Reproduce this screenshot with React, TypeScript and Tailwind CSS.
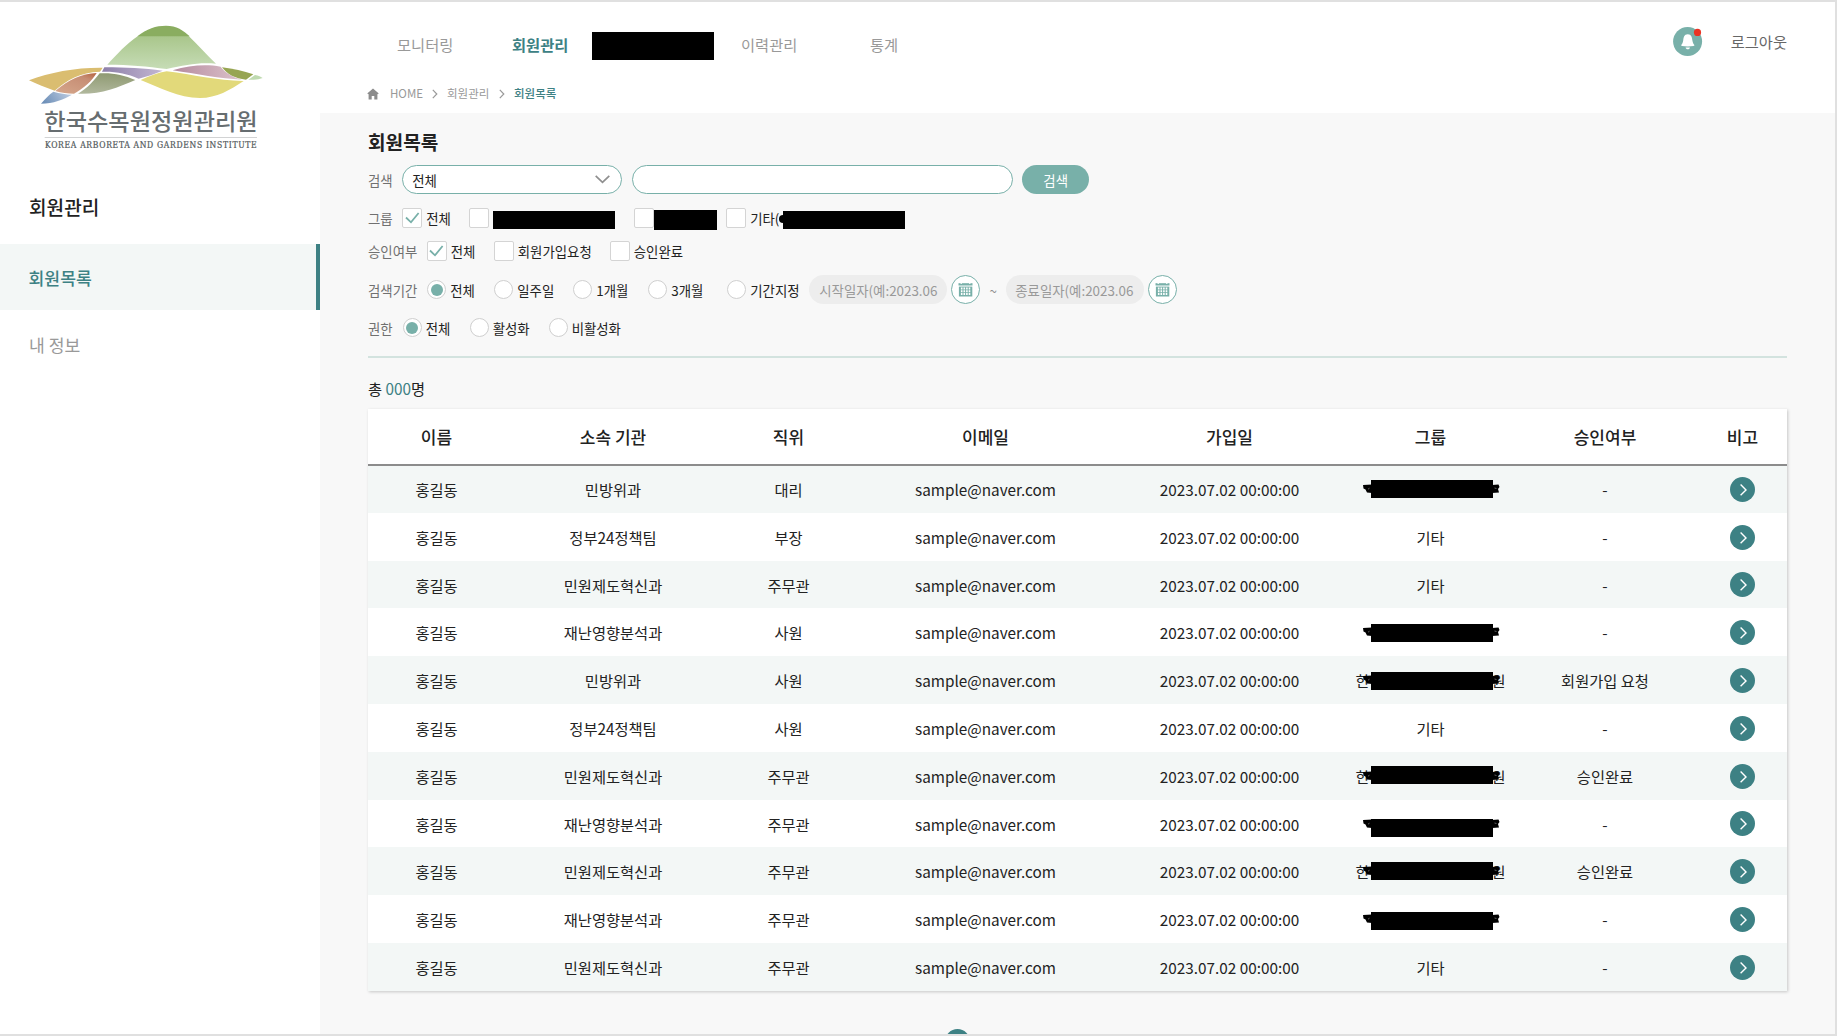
import React from "react";

type Mark = "scribble" | "named" | null;

interface Member {
  org: string;
  position: string;
  group: string;
  mark: Mark;
  barTop: string;
  status: string;
}

const members: Member[] = [
  { org: "민방위과", position: "대리", group: "", mark: "scribble", barTop: "top-[15px]", status: "-" },
  { org: "정부24정책팀", position: "부장", group: "기타", mark: null, barTop: "", status: "-" },
  { org: "민원제도혁신과", position: "주무관", group: "기타", mark: null, barTop: "", status: "-" },
  { org: "재난영향분석과", position: "사원", group: "", mark: "scribble", barTop: "top-[15.6px]", status: "-" },
  { org: "민방위과", position: "사원", group: "", mark: "named", barTop: "top-[15.8px]", status: "회원가입 요청" },
  { org: "정부24정책팀", position: "사원", group: "기타", mark: null, barTop: "", status: "-" },
  { org: "민원제도혁신과", position: "주무관", group: "", mark: "named", barTop: "top-[14.2px]", status: "승인완료" },
  { org: "재난영향분석과", position: "주무관", group: "", mark: "scribble", barTop: "top-[19.4px]", status: "-" },
  { org: "민원제도혁신과", position: "주무관", group: "", mark: "named", barTop: "top-[14.6px]", status: "승인완료" },
  { org: "재난영향분석과", position: "주무관", group: "", mark: "scribble", barTop: "top-[16.8px]", status: "-" },
  { org: "민원제도혁신과", position: "주무관", group: "기타", mark: null, barTop: "", status: "-" },
];

const columns =
  "grid grid-cols-[137px_216px_135px_259px_229px_173px_176px_94px] text-center";

function Logo() {
  return (
    <svg className="block h-[170px] w-[320px]" viewBox="0 0 960 510">
      <defs>
        <linearGradient id="hill" x1="0" y1="0" x2="0" y2="1">
          <stop offset="0" stopColor="#a9c68b" />
          <stop offset="1" stopColor="#c6dcb6" />
        </linearGradient>
        <linearGradient id="orange" x1="1" y1="0" x2="0.3" y2="1">
          <stop offset="0" stopColor="#b5623f" />
          <stop offset="0.3" stopColor="#c68d74" />
          <stop offset="1" stopColor="#d3a388" />
        </linearGradient>
        <linearGradient id="blue" x1="0" y1="0.6" x2="1" y2="0.3">
          <stop offset="0" stopColor="#6d8fb8" />
          <stop offset="1" stopColor="#bccbe0" />
        </linearGradient>
        <linearGradient id="purple" x1="0" y1="0" x2="1" y2="0">
          <stop offset="0" stopColor="#8d7fa9" />
          <stop offset="1" stopColor="#c3b7d2" />
        </linearGradient>
        <linearGradient id="olive" x1="0.5" y1="0" x2="0.4" y2="1">
          <stop offset="0" stopColor="#8f9a72" />
          <stop offset="1" stopColor="#b0b79c" />
        </linearGradient>
        <linearGradient id="pink" x1="0" y1="0" x2="1" y2="0">
          <stop offset="0" stopColor="#b58a9f" />
          <stop offset="1" stopColor="#dcc3cb" />
        </linearGradient>
      </defs>
      <path d="M322 194 C350 164 380 130 414 108 L566 108 C595 135 620 165 648 191 C600 186 556 194 500 207 C440 199 390 194 322 194Z" fill="url(#hill)" />
      <path d="M412 109 C440 86 468 77 498 77 C530 77 550 91 569 109Z" fill="#8aad60" />
      <path d="M87 241 C150 216 230 202 308 203 L300 215 C240 216 200 241 164 272 C138 264 110 251 87 241Z" fill="#dabd70" />
      <path d="M166 273 C205 240 245 220 290 219 C276 242 256 262 222 281 C203 281 184 279 166 273Z" fill="url(#orange)" />
      <path d="M123 311 C136 296 146 285 160 275 C180 280 198 283 216 284 C190 298 160 311 123 311Z" fill="url(#blue)" />
      <path d="M313 202 C380 202 430 205 488 212 C465 222 440 229 416 236 C380 220 350 214 306 215Z" fill="url(#purple)" />
      <path d="M299 220 C340 218 370 225 406 240 C350 264 300 284 234 281 C262 265 280 244 299 220Z" fill="url(#olive)" />
      <path d="M518 211 C570 195 620 192 662 200 C676 219 700 232 726 239 C660 236 590 222 518 211Z" fill="url(#pink)" />
      <path d="M422 240 C450 228 475 218 500 214 C580 224 650 242 731 243 C690 270 650 294 600 294 C535 294 480 262 422 240Z" fill="#e2d97a" />
      <path d="M666 202 C700 206 730 213 760 223 L738 239 C705 236 682 223 666 202Z" fill="#97a552" />
      <path d="M745 239 L765 225 C775 227 784 231 788 234 C774 239 760 240 745 239Z" fill="#bfdab0" />
      <text x="133" y="390" textLength="640" lengthAdjust="spacingAndGlyphs" fontSize="68" fontWeight="500" fill="#666d70" fontFamily='"Noto Sans CJK KR", sans-serif'>한국수목원정원관리원</text>
      <rect x="134" y="411" width="637" height="2.5" fill="#c9cbcc" />
      <text x="135" y="444" textLength="635" lengthAdjust="spacing" fontSize="25.5" fill="#555c60" stroke="#555c60" strokeWidth="0.7" fontFamily='"DejaVu Serif Condensed", "DejaVu Serif", serif'>KOREA ARBORETA AND GARDENS INSTITUTE</text>
    </svg>
  );
}

function Label({ children }: { children: React.ReactNode }) {
  return <span className="text-[#707070]">{children}</span>;
}

function Check({ on, text, className }: { on?: boolean; text?: string; className: string }) {
  return (
    <label className={"flex items-center " + className}>
      <span className="mr-1 flex size-[20px] shrink-0 items-center justify-center rounded-[2px] border border-[#d4d4d4] bg-white">
        {on && (
          <svg className="h-[12px] w-[15px]" viewBox="0 0 15 12" fill="none" stroke="#78b0a9" strokeWidth="1.8">
            <path d="M1 5.5 L6 10.3 L13.6 1" />
          </svg>
        )}
      </span>
      {text}
    </label>
  );
}

function Radio({ on, text, className }: { on?: boolean; text: string; className: string }) {
  return (
    <label className={"flex items-center " + className}>
      <span className="mr-1 flex size-[19px] shrink-0 items-center justify-center rounded-full border border-[#cfcfcf] bg-white">
        {on && <span className="size-[12px] rounded-full bg-[#78b0a9]" />}
      </span>
      {text}
    </label>
  );
}

function CalendarButton() {
  return (
    <button className="ml-1 flex size-[29px] items-center justify-center rounded-full border border-[#78b0a9] bg-white">
      <svg className="h-[15px] w-[15px]" viewBox="0 0 15 15">
        <rect x="0.5" y="1.2" width="14" height="2.3" fill="#78b0a9" />
        <rect x="2.6" y="0" width="1.2" height="2" fill="#fff" />
        <rect x="11.2" y="0" width="1.2" height="2" fill="#fff" />
        <rect x="0.9" y="4.6" width="13.4" height="9.9" fill="#78b0a9" />
        <path d="M3.7 5.4V13.6M6.3 5.4V13.6M8.9 5.4V13.6M11.5 5.4V13.6" stroke="#fff" strokeWidth="1.6" strokeDasharray="2 0.8" />
      </svg>
    </button>
  );
}

function Crumb() {
  return (
    <svg className="h-[10px] w-[6px]" viewBox="0 0 6 10" fill="none" stroke="#999" strokeWidth="1.2">
      <path d="M0.8 0.8 L4.8 5 L0.8 9.2" />
    </svg>
  );
}

function Redacted({ mark, barTop }: { mark: Mark; barTop: string }) {
  return (
    <div className="relative flex h-full items-center justify-center">
      {mark === "named" && (
        <span className="flex w-[150px] justify-between">
          <span>한</span>
          <span>원</span>
        </span>
      )}
      <svg className="absolute top-[19px] left-[19px] h-[10px] w-[137px]" viewBox="0 0 137 10">
        <path d="M0 1 L9 0.5 V9 L4 8.5 L2.5 5.5 L0.5 4.5Z M129 1 L135.5 0.5 L136.5 3 L135 5 L136 8.5 L129 9Z" fill="#000" />
        <path d="M5 5.2 l1.5 -1 M131.5 4 l2 .5" stroke="#777" strokeWidth="0.8" />
      </svg>
      <span className={"absolute left-[27px] h-[18px] w-[122px] bg-black " + barTop} />
    </div>
  );
}

export default function App() {
  return (
    <div className="h-[1036px] w-[1838px] overflow-hidden bg-white font-['Noto_Sans_CJK_KR',sans-serif] text-[15.3px] text-[#222]">
      <div className="flex h-full w-[1837px] overflow-hidden border-t-2 border-r-2 border-b-2 border-[#e0e0e0]">
        <aside className="w-[320px] shrink-0 bg-white">
          <div className="-mt-0.5">
            <Logo />
          </div>
          <h2 className="mt-[23px] pl-[29px] text-[19.1px] leading-[28px] font-medium">회원관리</h2>
          <nav className="mt-[23px]">
            <a className="flex h-[66px] items-center border-r-4 border-[#3d8184] bg-[#f3f7f6] pt-[2px] pl-[28.5px] text-[17.2px] font-medium text-[#3d8184]">
              회원목록
            </a>
            <a className="flex h-[69px] items-center pl-[29px] text-[17.2px] text-[#999]">내 정보</a>
          </nav>
        </aside>

        <div className="flex min-w-0 grow flex-col bg-[#f8f8f8]">
          <header className="h-[111px] shrink-0 bg-white">
            <div className="flex h-[82px] items-start">
              <nav className="flex items-start pt-[26px] pl-[77px] leading-[33px] text-[#999]">
                <a className="w-[115px]">모니터링</a>
                <a className="w-[80px] font-bold text-[#3d8184]">회원관리</a>
                <span className="mt-[4px] h-[28px] w-[122px] bg-black" />
                <a className="ml-[27px] w-[129px]">이력관리</a>
                <a>통계</a>
              </nav>
              <div className="mt-[25px] mr-[48px] ml-auto flex items-center">
                <svg className="size-[30px]" viewBox="0 0 30 30">
                  <circle cx="14.6" cy="14.6" r="14.5" fill="#78b0a9" />
                  <path d="M14.8 7.2 C18.5 7.2 19 10.5 19.4 13.5 C19.8 16 20.3 17 21.6 18.2 L20.5 19 C17 19.6 12.5 19.6 9 19 L8 18.2 C9.3 17 9.8 16 10.2 13.5 C10.6 10.5 11 7.2 14.8 7.2Z" fill="#fff" />
                  <path d="M12.6 20.4 H17 C16.8 22.8 12.8 22.8 12.6 20.4Z" fill="#fff" />
                  <circle cx="24.5" cy="5.4" r="3.6" fill="#ea3323" />
                </svg>
                <a className="mb-[2px] ml-[28px] text-[#666]">로그아웃</a>
              </div>
            </div>
            <div className="flex h-[20px] items-center pl-[47px] text-[11.5px] text-[#999]">
              <svg className="h-[12px] w-[12px]" viewBox="0 0 12 12" fill="#8c8c8c">
                <path d="M6 0.5 L11.8 5.6 L10.4 6.3 V11.5 H7.3 V8 H4.7 V11.5 H1.6 V6.3 L0.2 5.6Z" />
              </svg>
              <span className="ml-[11px] w-[42px]">HOME</span>
              <Crumb />
              <span className="ml-[9px] w-[52px]">회원관리</span>
              <Crumb />
              <span className="ml-[9px] font-medium text-[#3d8184]">회원목록</span>
            </div>
          </header>

          <main className="flex flex-col pl-[48px] pr-[48px]">
            <h1 className="mt-[15px] h-[28px] text-[19.1px] leading-[28px] font-bold">회원목록</h1>

            <section className="text-[13.4px] leading-[20px]">
              <div className="mt-[9px] flex h-[29px] items-center">
                <Label>검색</Label>
                <div className="ml-[9.5px] flex h-[29px] w-[220px] items-center justify-between rounded-full border border-[#78b0a9] bg-white pr-[11px] pl-[9px]">
                  전체
                  <svg className="h-[9px] w-[15px]" viewBox="0 0 15 9" fill="none" stroke="#8f8f8f" strokeWidth="1.7">
                    <path d="M0.7 0.8 L7.5 7.4 L14.3 0.8" />
                  </svg>
                </div>
                <div className="ml-[9.5px] h-[29px] w-[381px] rounded-full border border-[#78b0a9] bg-white" />
                <button className="ml-[9.5px] h-[29px] w-[67px] rounded-full bg-[#78b0a9] text-white">검색</button>
              </div>

              <div className="mt-[14px] flex h-[20px] items-center">
                <Label>그룹</Label>
                <Check on text="전체" className="ml-[9.5px] w-[67px]" />
                <Check className="w-[24px]" />
                <span className="mt-[4px] h-[18px] w-[122px] bg-black" />
                <Check className="ml-[19px] w-[20px]" />
                <span className="mt-[4px] h-[20px] w-[63px] bg-black" />
                <Check text="기타(" className="ml-[9px] w-[57px]" />
                <span className="relative mt-[4px] h-[18px] w-[122px] bg-black">
                  <span className="absolute top-[4px] -left-[4px] h-[8px] w-[5px] rounded-l-full bg-black" />
                </span>
              </div>

              <div className="mt-[13px] flex h-[20px] items-center">
                <Label>승인여부</Label>
                <Check on text="전체" className="ml-[9.5px] w-[67px]" />
                <Check text="회원가입요청" className="w-[116px]" />
                <Check text="승인완료" className="" />
              </div>

              <div className="mt-[14px] flex h-[29px] items-center">
                <Label>검색기간</Label>
                <Radio on text="전체" className="ml-[10px] w-[67px]" />
                <Radio text="일주일" className="w-[79px]" />
                <Radio text="1개월" className="w-[75px]" />
                <Radio text="3개월" className="w-[79px]" />
                <Radio text="기간지정" className="w-[82px]" />
                <span className="flex h-[29px] w-[138px] items-center rounded-full bg-[#ededed] pl-[10px] whitespace-nowrap text-[#999]">시작일자(예:2023.06</span>
                <CalendarButton />
                <span className="w-[26px] text-center text-[#8c8c8c]">~</span>
                <span className="flex h-[29px] w-[138px] items-center rounded-full bg-[#ededed] pl-[9px] whitespace-nowrap text-[#999]">종료일자(예:2023.06</span>
                <CalendarButton />
              </div>

              <div className="mt-[14px] flex h-[19px] items-center">
                <Label>권한</Label>
                <Radio on text="전체" className="ml-[10px] w-[67px]" />
                <Radio text="활성화" className="w-[79px]" />
                <Radio text="비활성화" className="" />
              </div>
            </section>

            <hr className="mt-[19px] border-t-2 border-[#d3e3df]" />

            <p className="mt-[19px] h-[22px] text-[15.3px] leading-[22px]">
              총 <span className="text-[#3d8184]">000</span>명
            </p>

            <div className="mt-[10px] w-[1419px] bg-white shadow-[1px_1px_3px_rgba(0,0,0,0.2)]">
              <div className={columns + " relative z-10 -mb-px h-[57px] border-b-2 border-[#8c8c8c] text-[17px] leading-[56px] font-medium"}>
                <span>이름</span>
                <span>소속 기관</span>
                <span>직위</span>
                <span>이메일</span>
                <span>가입일</span>
                <span>그룹</span>
                <span>승인여부</span>
                <span className="pl-[5px]">비고</span>
              </div>
              {members.map((m, i) => (
                <div
                  key={i}
                  className={
                    columns +
                    " h-[47.8px] leading-[48.6px] " +
                    (i % 2 === 0 ? "bg-[#f3f7f6]" : "bg-white")
                  }
                >
                  <span>홍길동</span>
                  <span>{m.org}</span>
                  <span>{m.position}</span>
                  <span>sample@naver.com</span>
                  <span>2023.07.02 00:00:00</span>
                  {m.mark ? <Redacted mark={m.mark} barTop={m.barTop} /> : <span>{m.group}</span>}
                  <span>{m.status}</span>
                  <span className="flex items-center justify-center pl-[5px]">
                    <svg className="size-[25px]" viewBox="0 0 25 25" fill="none">
                      <circle cx="12.5" cy="12.5" r="12.5" fill="#3d8184" />
                      <path d="M10.6 7.6 L16 13 L10.6 18.2" stroke="#fff" strokeWidth="1.4" />
                    </svg>
                  </span>
                </div>
              ))}
            </div>

            <div className="mt-[38px] ml-[577px] size-[25px] shrink-0 rounded-full bg-[#3d8184]" />
          </main>
        </div>
      </div>
    </div>
  );
}
